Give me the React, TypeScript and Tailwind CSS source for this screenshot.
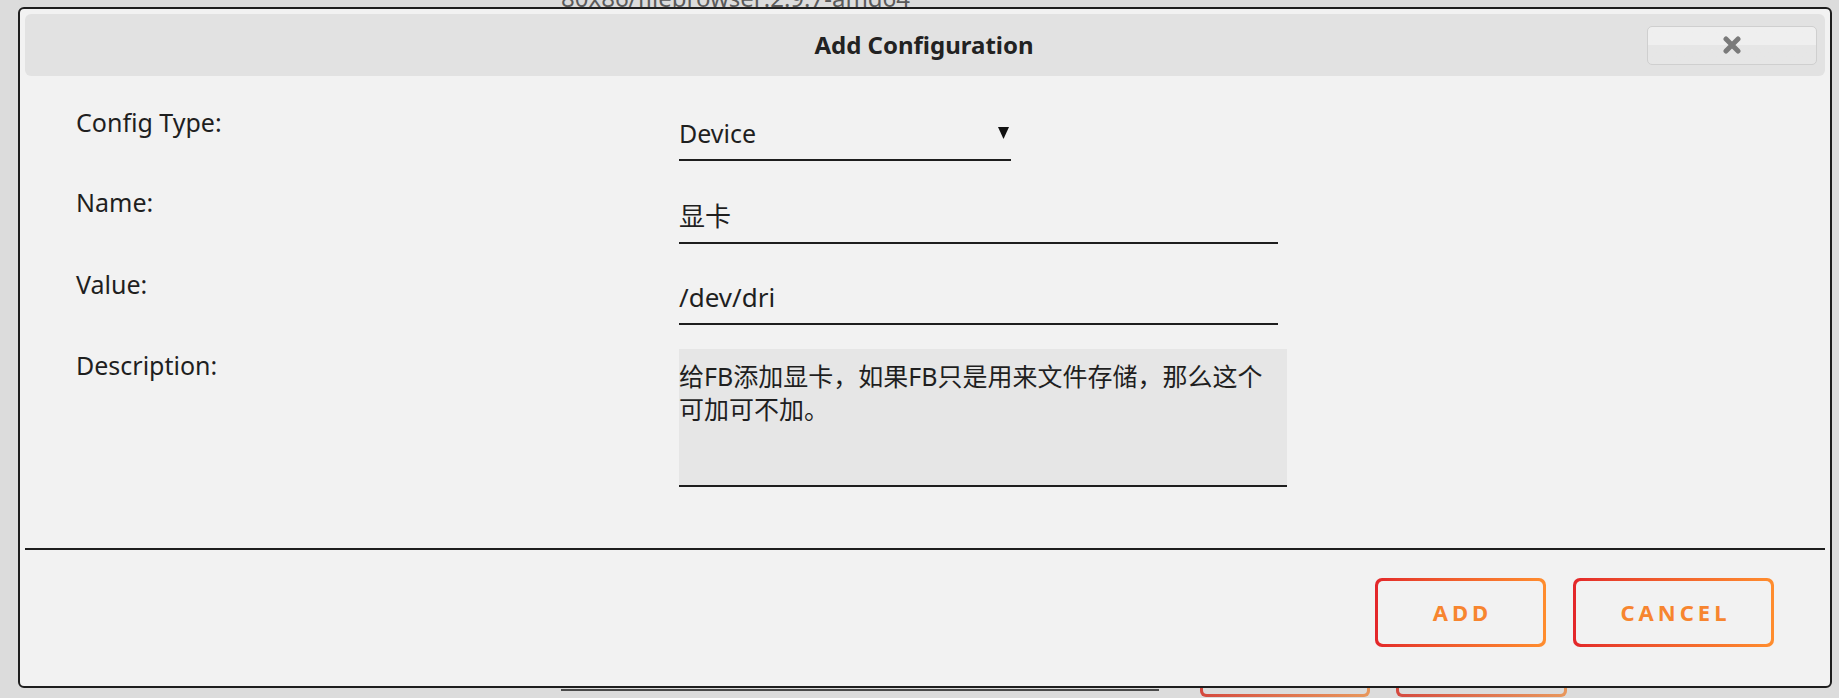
import React from 'react'

const rows = [
    { label: 'Name:', value: '显卡', wrap: 'mt-[25px]', pad: 'pt-[14px]' },
    { label: 'Value:', value: '/dev/dri', wrap: 'mt-[24px]', pad: 'pt-[13px]' },
]

function GradientButton({ text, width }: { text: string; width: string }) {
    return (
        <div className={`h-[69px] ${width} rounded-[7px] bg-linear-to-r from-[#e3262a] to-[#ff8d2e] p-[3px]`}>
            <div className="flex h-full w-full items-center justify-center rounded-[5px] bg-[#f2f2f2] pl-[4px] text-[22px] font-bold tracking-[4px] text-[#f7852f]">
                {text}
            </div>
        </div>
    )
}

export default function App() {
    return (
        <div className="relative h-[698px] w-full overflow-hidden bg-[#dcdcdc] font-['Noto_Sans','Noto_Sans_CJK_SC',sans-serif] text-[#1f1f1f]">
            {/* page behind the overlay */}
            <div className="flex h-full flex-col justify-between">
                <div className="-mt-[14px] pl-[561px] text-[24px] leading-[24px] text-[#5a5a5a]">80x86/filebrowser:2.9.7-amd64</div>
                <div className="flex items-end pb-[1px] pl-[561px]">
                    <div className="mb-[6px] h-[2px] w-[598px] bg-[#4a4a4a]" />
                    <div className="ml-[41px] h-[40px] w-[170px] rounded-md bg-linear-to-r from-[#d4493f] to-[#e8975c] p-[3px]">
                        <div className="h-full w-full rounded bg-[#dcdcdc]" />
                    </div>
                    <div className="ml-[26px] h-[40px] w-[171px] rounded-md bg-linear-to-r from-[#d4493f] to-[#e8975c] p-[3px]">
                        <div className="h-full w-full rounded bg-[#dcdcdc]" />
                    </div>
                </div>
            </div>

            {/* dialog */}
            <div className="absolute left-[18px] top-[7px] flex h-[681px] w-[1814px] flex-col rounded-[6px] border-2 border-[#1e1e1e] bg-[#f2f2f2] p-[5px]">
                <div className="grid h-[62px] shrink-0 grid-cols-[1fr_auto_1fr] items-center rounded-[6px] bg-[#e2e2e2] pr-[8px]">
                    <div />
                    <div className="pl-[6px] text-[24px] font-bold text-[#222]">Add Configuration</div>
                    <div className="flex justify-end">
                        <button className="flex h-[39px] w-[170px] items-center justify-center rounded-[5px] border border-[#cfcfcf] bg-linear-to-b from-[#efefef] from-50% to-[#e6e6e6] to-50%">
                            <svg width="20" height="18" viewBox="0 0 20 18">
                                <path d="M4 3 L16 15 M16 3 L4 15" stroke="#7a7a7a" strokeWidth="5" strokeLinecap="round" />
                            </svg>
                        </button>
                    </div>
                </div>

                <div className="flex h-[472px] shrink-0 flex-col pl-[51px] pt-[30px] text-[25px]">
                    <div className="flex">
                        <div className="w-[603px] shrink-0 leading-[32px]">Config Type:</div>
                        <div className="flex w-[332px] items-center justify-between border-b-2 border-[#1e1e1e] pb-[10px] pt-[11px] leading-[32px]">
                            <span>Device</span>
                            <svg width="11" height="12" viewBox="0 0 11 12" className="mr-[2px]">
                                <path d="M0 0 H11 L5.5 12 Z" fill="#111" />
                            </svg>
                        </div>
                    </div>
                    {rows.map((row) => (
                        <div key={row.label} className={`flex ${row.wrap}`}>
                            <div className="w-[603px] shrink-0 leading-[32px]">{row.label}</div>
                            <div className={`w-[599px] border-b-2 border-[#1e1e1e] pb-[10px] ${row.pad} text-[26px] leading-[32px]`}>{row.value}</div>
                        </div>
                    ))}
                    <div className="mt-[24px] flex">
                        <div className="w-[603px] shrink-0 leading-[32px]">Description:</div>
                        <div className="h-[138px] w-[608px] border-b-2 border-[#1e1e1e] bg-[#e6e6e6] pt-[11px] leading-[33px]">
                            给FB添加显卡，如果FB只是用来文件存储，那么这个<br />可加可不加。
                        </div>
                    </div>
                </div>

                <div className="h-[2px] shrink-0 bg-[#1e1e1e]" />

                <div className="flex justify-end gap-[27px] pr-[51px] pt-[28px]">
                    <GradientButton text="ADD" width="w-[171px]" />
                    <GradientButton text="CANCEL" width="w-[201px]" />
                </div>
            </div>
        </div>
    )
}
